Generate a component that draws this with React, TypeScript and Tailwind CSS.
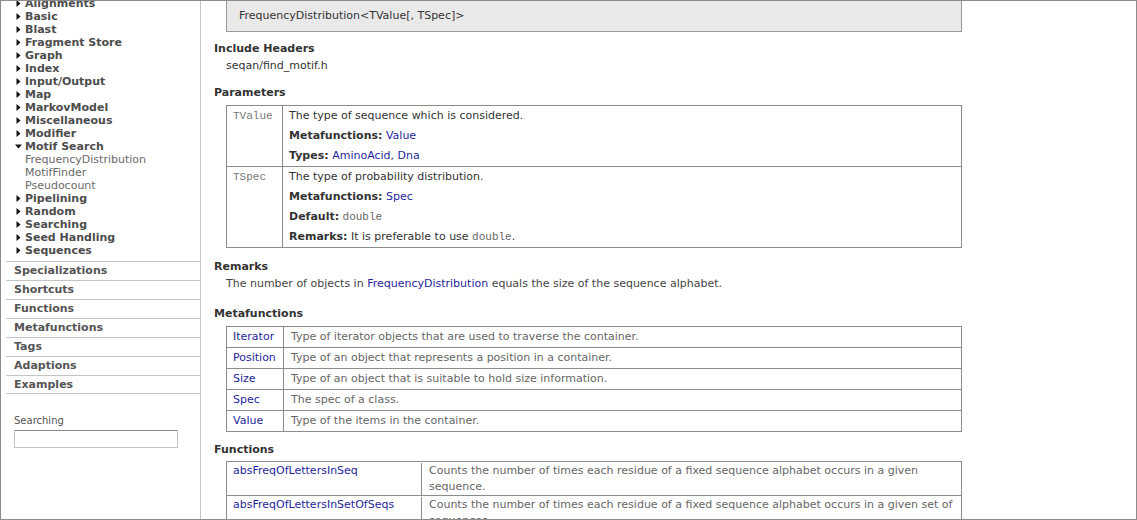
import type { ReactNode } from "react";

const LINK = "text-[#1f1f9c]";

const tree: { label: string; open?: boolean; children?: string[] }[] = [
  { label: "Alignments" },
  { label: "Basic" },
  { label: "Blast" },
  { label: "Fragment Store" },
  { label: "Graph" },
  { label: "Index" },
  { label: "Input/Output" },
  { label: "Map" },
  { label: "MarkovModel" },
  { label: "Miscellaneous" },
  { label: "Modifier" },
  { label: "Motif Search", open: true, children: ["FrequencyDistribution", "MotifFinder", "Pseudocount"] },
  { label: "Pipelining" },
  { label: "Random" },
  { label: "Searching" },
  { label: "Seed Handling" },
  { label: "Sequences" },
];

const sections = ["Specializations", "Shortcuts", "Functions", "Metafunctions", "Tags", "Adaptions", "Examples"];

const metafunctions = [
  ["Iterator", "Type of iterator objects that are used to traverse the container."],
  ["Position", "Type of an object that represents a position in a container."],
  ["Size", "Type of an object that is suitable to hold size information."],
  ["Spec", "The spec of a class."],
  ["Value", "Type of the items in the container."],
];

const functions = [
  ["absFreqOfLettersInSeq", "Counts the number of times each residue of a fixed sequence alphabet occurs in a given sequence."],
  ["absFreqOfLettersInSetOfSeqs", "Counts the number of times each residue of a fixed sequence alphabet occurs in a given set of sequences."],
];

function Arrow({ open }: { open?: boolean }) {
  if (open) {
    return (
      <svg width="7" height="7" viewBox="0 0 7 7" className="shrink-0">
        <polygon points="0,1.5 7,1.5 3.5,5.5" fill="#111" />
      </svg>
    );
  }
  return (
    <svg width="7" height="7" viewBox="0 0 7 7" className="shrink-0">
      <polygon points="1.5,0 5.5,3.5 1.5,7" fill="#111" />
    </svg>
  );
}

function Sidebar() {
  return (
    <aside className="w-[200px] shrink-0 border-r border-[#c4c4c4] overflow-hidden">
      <ul className="-mt-[4px] pl-[14px]">
        {tree.map((t) => (
          <li key={t.label}>
            <div className="flex items-center gap-[3px] h-[13px] leading-[13px] font-bold text-[#4d4d4d]">
              <Arrow open={t.open} />
              <span>{t.label}</span>
            </div>
            {t.children && (
              <ul className="pl-[10px]">
                {t.children.map((c) => (
                  <li key={c} className="h-[13px] leading-[13px] text-[#6a6a6a]">
                    {c}
                  </li>
                ))}
              </ul>
            )}
          </li>
        ))}
      </ul>
      <ul className="mt-[4px] ml-[5px]">
        {sections.map((s) => (
          <li
            key={s}
            className="h-[19px] border-t border-[#c4c4c4] last:border-b pl-[8px] leading-[18px] font-bold text-[#555]"
          >
            {s}
          </li>
        ))}
      </ul>
      <div className="mt-[20px] pl-[13px] text-[10px] text-[#555] leading-[13px]">Searching</div>
      <div className="ml-[13px] mt-[3px] w-[164px] h-[18px] border border-[#c2c2c2] border-t-[#8a8a8a] bg-white" />
    </aside>
  );
}

function Heading({ children, className }: { children: ReactNode; className?: string }) {
  return <h3 className={`h-[16px] leading-[16px] font-bold text-[#333] ${className ?? ""}`}>{children}</h3>;
}

function Mono({ children }: { children: ReactNode }) {
  return <span className="font-['Liberation_Mono',monospace] text-[11px] text-[#666]">{children}</span>;
}

function Content() {
  return (
    <main className="flex-1 overflow-hidden pl-[13px] text-[#444]">
      <div className="ml-[12px] -mt-[1px] w-[736px] h-[32px] border border-[#999] bg-[#e9e9e9] pl-[12px] leading-[30px] text-[#333]">
        FrequencyDistribution&lt;TValue[, TSpec]&gt;
      </div>

      <Heading className="mt-[9px]">Include Headers</Heading>
      <p className="ml-[12px] mt-[1px] h-[16px] leading-[16px] text-[#333]">seqan/find_motif.h</p>

      <Heading className="mt-[11px]">Parameters</Heading>
      <div className="ml-[12px] mt-[4px] w-[736px] border border-[#8c8c8c]">
        <div className="flex border-b border-[#8c8c8c]">
          <div className="w-[56px] shrink-0 border-r border-[#8c8c8c] pl-[6px] leading-[20px] font-['Liberation_Mono',monospace] text-[11px] text-[#777]">
            TValue
          </div>
          <div className="pl-[6px] leading-[20px] text-[#333]">
            <p>The type of sequence which is considered.</p>
            <p>
              <b>Metafunctions:</b> <span className={LINK}>Value</span>
            </p>
            <p>
              <b>Types:</b> <span className={LINK}>AminoAcid</span>, <span className={LINK}>Dna</span>
            </p>
          </div>
        </div>
        <div className="flex">
          <div className="w-[56px] shrink-0 border-r border-[#8c8c8c] pl-[6px] leading-[20px] font-['Liberation_Mono',monospace] text-[11px] text-[#777]">
            TSpec
          </div>
          <div className="pl-[6px] leading-[20px] text-[#333]">
            <p>The type of probability distribution.</p>
            <p>
              <b>Metafunctions:</b> <span className={LINK}>Spec</span>
            </p>
            <p>
              <b>Default:</b> <Mono>double</Mono>
            </p>
            <p>
              <b>Remarks:</b> It is preferable to use <Mono>double</Mono>.
            </p>
          </div>
        </div>
      </div>

      <Heading className="mt-[11px]">Remarks</Heading>
      <p className="ml-[12px] mt-[1px] h-[16px] leading-[16px] text-[#444]">
        The number of objects in <span className={LINK}>FrequencyDistribution</span> equals the size of the sequence
        alphabet.
      </p>

      <Heading className="mt-[14px]">Metafunctions</Heading>
      <div className="ml-[12px] mt-[4px] w-[736px] border border-[#8c8c8c]">
        {metafunctions.map(([name, desc]) => (
          <div key={name} className="flex border-b border-[#8c8c8c] last:border-b-0 leading-[20px]">
            <div className={`w-[57px] shrink-0 border-r border-[#8c8c8c] pl-[6px] ${LINK}`}>{name}</div>
            <div className="pl-[7px] text-[#666]">{desc}</div>
          </div>
        ))}
      </div>

      <Heading className="mt-[10px]">Functions</Heading>
      <div className="ml-[12px] mt-[3px] w-[736px] border border-[#8c8c8c]">
        {functions.map(([name, desc]) => (
          <div key={name} className="flex border-b border-[#8c8c8c] leading-[16px] pt-[1px]">
            <div className={`w-[195px] shrink-0 border-r border-[#8c8c8c] pl-[6px] ${LINK}`}>{name}</div>
            <div className="pl-[7px] pr-[8px] text-[#666]">{desc}</div>
          </div>
        ))}
      </div>
    </main>
  );
}

export default function App() {
  return (
    <div className="w-[1137px] h-[520px] bg-white">
      <div className="w-[1137px] h-[520px] border border-[#8c8c8c] flex overflow-hidden bg-white font-['DejaVu_Sans',Verdana,sans-serif] text-[11px]">
        <Sidebar />
        <Content />
      </div>
    </div>
  );
}
